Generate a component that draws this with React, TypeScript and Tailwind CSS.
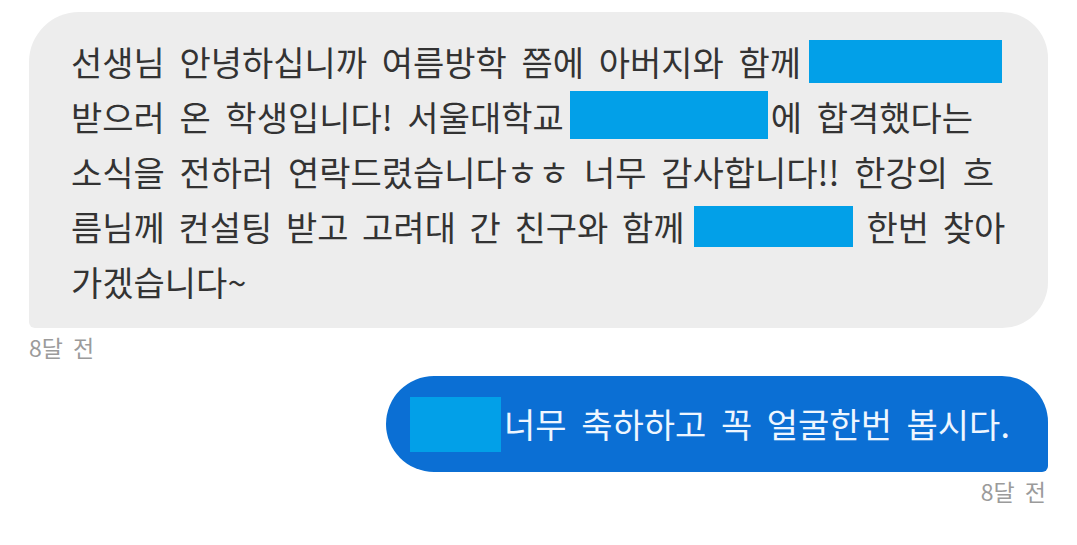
import React from "react";

const font = { fontFamily: '"Noto Sans CJK KR", "Noto Sans", sans-serif' };

function Box({ w, h, className = "" }: { w: string; h: string; className?: string }) {
  return <span className={`inline-block bg-[#02a0e8] ${w} ${h} ${className}`} />;
}

export default function App() {
  return (
    <div className="w-[1077px] h-[545px] bg-white overflow-hidden" style={font}>
      <div className="pt-[12px] pl-[29px]">
        <div className="w-[1019px] h-[316px] bg-[#ededed] rounded-tl-[50px] rounded-tr-[46px] rounded-br-[46px] rounded-bl-[6px] pl-[42px] pt-[22px] text-[34px] text-[#333333] [word-spacing:7px]">
          <div className="flex items-center h-[55px] whitespace-pre leading-none">
            <span>선생님 안녕하십니까 여름방학 쯤에 아버지와 함께</span>
            <Box w="w-[193px]" h="h-[43px]" className="ml-[8px]" />
          </div>
          <div className="flex items-center h-[55px] whitespace-pre leading-none">
            <span>받으러 온 학생입니다! 서울대학교</span>
            <Box w="w-[198px]" h="h-[48px]" className="ml-[6px] mb-[4px]" />
            <span className="ml-[3px]">에 합격했다는</span>
          </div>
          <div className="flex items-center h-[55px] whitespace-pre leading-none">
            <span>소식을 전하러 연락드렸습니다ㅎㅎ 너무 감사합니다!! 한강의 흐</span>
          </div>
          <div className="flex items-center h-[55px] whitespace-pre leading-none [word-spacing:6px]">
            <span>름님께 컨설팅 받고 고려대 간 친구와 함께</span>
            <Box w="w-[159px]" h="h-[41px]" className="ml-[10px]" />
            <span className="ml-[13px]">한번 찾아</span>
          </div>
          <div className="flex items-center h-[55px] whitespace-pre leading-none">
            <span>가겠습니다~</span>
          </div>
        </div>
        <div className="mt-[6px] h-[26px] flex items-center text-[23px] leading-none text-[#9b9b9b] [word-spacing:5px]">
          8달 전
        </div>
      </div>
      <div className="mt-[16px] flex justify-end pr-[29px]">
        <div className="w-[662px] h-[96px] bg-[#0b6fd4] rounded-l-[48px] rounded-tr-[46px] rounded-br-[6px] pl-[24px] flex items-center text-[34px] text-[#eef6ff] leading-none whitespace-pre [word-spacing:7px]">
          <Box w="w-[91px]" h="h-[55px]" />
          <span className="ml-[3px]">너무 축하하고 꼭 얼굴한번 봅시다.</span>
        </div>
      </div>
      <div className="mt-[8px] flex justify-end pr-[31px] text-[23px] leading-none text-[#9b9b9b] [word-spacing:5px]">
        8달 전
      </div>
    </div>
  );
}
